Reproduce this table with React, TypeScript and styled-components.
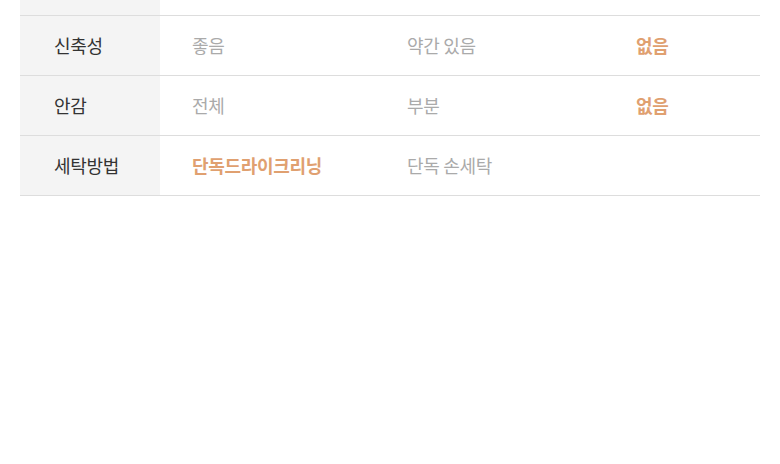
import { Fragment } from "react";
import styled, { createGlobalStyle } from "styled-components";

const GlobalStyle = createGlobalStyle`
  html, body {
    margin: 0;
    padding: 0;
    background: #fff;
  }
  body {
    font-family: "Noto Sans CJK KR", "Noto Sans", sans-serif;
  }
`;

const Page = styled.div`
  width: 780px;
  height: 464px;
  padding: 0 20px;
  box-sizing: border-box;
  overflow: hidden;
`;

const Table = styled.div`
  display: grid;
  grid-template-columns: 140px 215px 229px 1fr;
  margin-top: -44px;
`;

const HeadCell = styled.div`
  height: 60px;
  box-sizing: border-box;
  padding: 0 0 2px 34px;
  border-bottom: 1px solid #dddddd;
  background: #f4f4f4;
  display: flex;
  align-items: center;
  font-size: 18px;
  letter-spacing: -0.3px;
  color: #333333;
`;

const ValueCell = styled.div<{ $active?: boolean }>`
  height: 60px;
  box-sizing: border-box;
  padding: 0 0 2px 32px;
  border-bottom: 1px solid #dddddd;
  display: flex;
  align-items: center;
  font-size: 18px;
  letter-spacing: -0.3px;
  color: ${(p) => (p.$active ? "#e0a070" : "#aaaaaa")};
  font-weight: ${(p) => (p.$active ? 700 : 400)};
`;

type Row = { label: string; values: string[]; active: number };

const rows: Row[] = [
  { label: "", values: ["", "", ""], active: -1 },
  { label: "신축성", values: ["좋음", "약간 있음", "없음"], active: 2 },
  { label: "안감", values: ["전체", "부분", "없음"], active: 2 },
  { label: "세탁방법", values: ["단독드라이크리닝", "단독 손세탁", ""], active: 0 },
];

export default function App() {
  return (
    <>
      <GlobalStyle />
      <Page>
        <Table>
          {rows.map((row, i) => (
            <Fragment key={i}>
              <HeadCell>{row.label}</HeadCell>
              {row.values.map((v, j) => (
                <ValueCell key={j} $active={j === row.active}>
                  {v}
                </ValueCell>
              ))}
            </Fragment>
          ))}
        </Table>
      </Page>
    </>
  );
}
